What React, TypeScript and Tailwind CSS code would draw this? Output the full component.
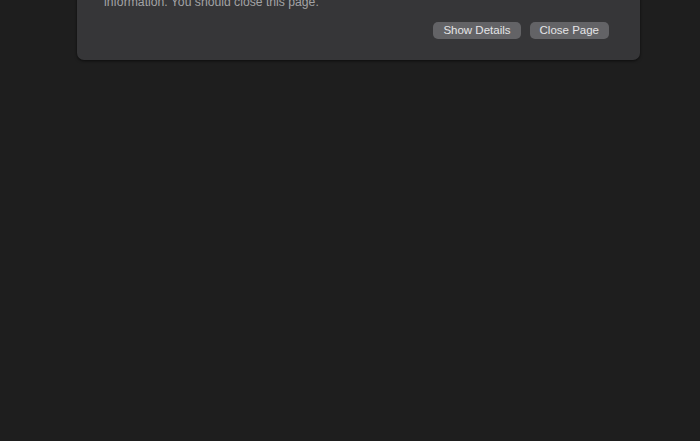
import React from "react";

export default function App() {
  return (
    <div className="w-[700px] h-[441px] overflow-hidden bg-[#1e1e1e]" style={{ fontFamily: '"Liberation Sans", Arial, sans-serif' }}>
      <div className="ml-[77px] w-[563px] mt-[-28px] rounded-b-[7px] bg-[#363638] shadow-[0_1px_3px_rgba(0,0,0,0.6)] px-[27px] pt-[6px] pb-[21px]">
        <p className="text-[12.2px] leading-[16px] text-[#a3a3a5]">
          This page may be trying to steal your passwords or other personal
          <br />
          information. You should close this page.
        </p>
        <div className="mt-[12px] flex justify-end gap-[9px] pr-[4px]">
          <button className="h-[17px] px-[10px] rounded-[5px] bg-[#636366] text-[11.5px] leading-[17px] text-[#e5e5e7]">
            Show Details
          </button>
          <button className="h-[17px] px-[10px] rounded-[5px] bg-[#636366] text-[11.5px] leading-[17px] text-[#e5e5e7]">
            Close Page
          </button>
        </div>
      </div>
    </div>
  );
}
